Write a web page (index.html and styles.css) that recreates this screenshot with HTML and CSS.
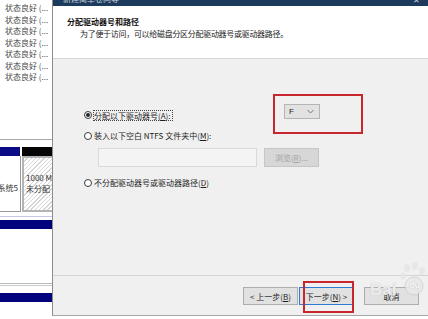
FILE: index.html
```html
<!DOCTYPE html>
<html lang="zh-CN">
<head>
<meta charset="utf-8">
<title>分配驱动器号和路径</title>
<link rel="stylesheet" href="styles.css">
</head>
<body>
<div class="screen">
  <aside class="left">
    <ul class="status-list">
      <li>状态良好 (...</li>
      <li>状态良好 (...</li>
      <li>状态良好 (...</li>
      <li>状态良好 (...</li>
      <li>状态良好 (...</li>
      <li>状态良好 (...</li>
      <li>状态良好 (...</li>
    </ul>
    <div class="rule"></div>
    <div class="bars"><span class="bar-blue"></span><span class="bar-black"></span></div>
    <div class="cells">
      <div class="cell sys"><span>系统5</span></div>
      <div class="cell unalloc"><span>1000 MB</span><span>未分配</span></div>
    </div>
    <div class="rule lav"></div>
    <div class="navy first"></div>
    <div class="double"></div>
    <div class="navy second"></div>
  </aside>

  <section class="dialog">
    <div class="titlebar"><span class="tb-text">新建简单卷向导</span><span class="tb-close">✕</span></div>
    <header class="head">
      <div class="h-title">分配驱动器号和路径</div>
      <div class="h-sub">为了便于访问，可以给磁盘分区分配驱动器号或驱动器路径。</div>
    </header>
    <div class="body">
      <div class="top">
        <div class="opts-col">
          <div class="radio-row"><span class="radio checked"></span><span class="focus">分配以下驱动器号(<u>A</u>):</span></div>
          <div class="radio-row"><span class="radio"></span><span class="lbl">装入以下空白 NTFS 文件夹中(<u>M</u>):</span></div>
        </div>
        <div class="annot-box">
          <div class="combo"><span class="combo-val">F</span>
            <svg class="chev" width="7" height="5" viewBox="0 0 7 5"><path d="M0.5 1 L3.5 4 L6.5 1" fill="none" stroke="#777" stroke-width="1"/></svg>
          </div>
        </div>
      </div>
      <div class="path-row">
        <div class="path-input"></div>
        <div class="browse">浏览(<u>R</u>)...</div>
      </div>
      <div class="radio-row third"><span class="radio"></span><span class="lbl">不分配驱动器号或驱动器路径(<u>D</u>)</span></div>
    </div>
    <footer class="foot">
      <div class="btn">&lt; 上一步(<u>B</u>)</div>
      <div class="btn default">下一步(<u>N</u>) &gt;<span class="annot"></span></div>
      <div class="btn cancel">取消</div>
      <div class="watermark">
        <span class="wm-bai">Bai</span>
        <svg class="wm-paw" width="26" height="34" viewBox="0 0 26 34">
          <ellipse cx="7" cy="6" rx="3" ry="4" fill="#e6e6e6"/>
          <ellipse cx="15" cy="4" rx="3" ry="4" fill="#e6e6e6"/>
          <ellipse cx="22" cy="9" rx="3" ry="4" fill="#e6e6e6"/>
          <ellipse cx="3" cy="14" rx="2.5" ry="3.5" fill="#e6e6e6"/>
          <circle cx="14" cy="24" r="9" fill="#e9e9e9" stroke="#d0d0d0" stroke-width="1"/>
        </svg>
        <span class="wm-du">du</span>
      </div>
    </footer>
  </section>
</div>
</body>
</html>
```

FILE: styles.css
```css
* { box-sizing: border-box; }

html, body {
  margin: 0;
  padding: 0;
}

body {
  width: 428px;
  height: 319px;
  overflow: hidden;
  background: #ffffff;
  font-family: "Noto Sans CJK SC", "Noto Sans", sans-serif;
  font-size: 8px;
  color: #1e1e1e;
}

u { text-decoration: underline; text-underline-offset: 1px; }

.screen {
  display: flex;
  height: 319px;
}

/* ---------- left strip (disk management behind) ---------- */
.left {
  width: 52px;
  flex: none;
  overflow: hidden;
  color: #4a4a4a;
  background: #fff;
}

.status-list {
  list-style: none;
  margin: 0;
  padding: 2px 0 0 5px;
  height: 139px;
  line-height: 11.5px;
  white-space: nowrap;
}

.rule {
  height: 1px;
  background: #a9a9a9;
}

.bars {
  display: flex;
  gap: 2px;
  height: 9px;
  margin-top: 7px;
}
.bar-blue { width: 20px; background: #0b0b86; }
.bar-black { flex: 1; background: #050505; }

.cells {
  display: flex;
  gap: 1px;
  height: 56px;
  white-space: nowrap;
  line-height: 11px;
  color: #333;
}
.cell { overflow: hidden; display: flex; flex-direction: column; }
.cell.sys {
  width: 21px;
  background: #fff;
  border-right: 1px solid #9a9a9a;
  border-bottom: 1px solid #9a9a9a;
  align-items: flex-end;
  padding-top: 26px;
  padding-right: 2px;
}
.cell.unalloc {
  flex: 1;
  border: 2px solid #b4b4b4;
  border-right: none;
  padding: 14px 0 0 2px;
  background: repeating-linear-gradient(135deg, #ffffff 0 2px, #d6d6d6 2px 3px);
}

.rule.lav {
  margin-top: 4px;
  background: #c6c6ec;
}

.navy {
  height: 9px;
  background: #02027c;
}
.navy.first { margin-top: 3px; }
.double {
  margin-top: 54px;
  height: 3px;
  border-top: 1px solid #b9b9b9;
  border-bottom: 1px solid #c9c9c9;
}
.navy.second { margin-top: 7px; }

/* ---------- wizard dialog ---------- */
.dialog {
  flex: 1;
  height: 316px;
  display: flex;
  flex-direction: column;
  border-left: 1px solid #8c8c8c;
  border-bottom: 1px solid #a6a6a6;
  background: #f0f0f0;
}

.titlebar {
  height: 6px;
  flex: none;
  background: #1c3a5c;
  overflow: hidden;
  display: flex;
  justify-content: space-between;
  padding: 0 8px 0 10px;
  color: #c9d3df;
}
.tb-text { margin-top: -7px; line-height: 11px; }
.tb-close { margin-top: -6px; line-height: 11px; font-size: 8px; }

.head {
  height: 53px;
  flex: none;
  background: #ffffff;
  border-bottom: 1px solid #d7d7d7;
  padding: 10px 0 0 14px;
}
.h-title {
  font-weight: bold;
  line-height: 11px;
  color: #111;
}
.h-sub {
  margin-top: 1px;
  padding-left: 13px;
  line-height: 11px;
  color: #222;
  letter-spacing: -0.3px;
}

.body {
  height: 217px;
  flex: none;
  border-bottom: 1px solid #d4d4d4;
  padding: 35px 0 0 31px;
}

.top { display: flex; }

.opts-col {
  width: 189px;
  padding-top: 16px;
  display: flex;
  flex-direction: column;
  gap: 11px;
}

.radio-row {
  display: flex;
  align-items: center;
  gap: 1px;
  height: 10px;
  white-space: nowrap;
}
.radio {
  width: 8px;
  height: 8px;
  flex: none;
  border: 1px solid #3a3a3a;
  border-radius: 50%;
  background: #fff;
  display: flex;
  align-items: center;
  justify-content: center;
}
.radio.checked::after {
  content: "";
  width: 4px;
  height: 4px;
  border-radius: 50%;
  background: #262626;
}
.focus {
  border: 1px dotted #444;
  line-height: 9px;
  padding: 0 1px 0 0;
}
.lbl { margin-left: 1px; line-height: 10px; }

.annot-box {
  width: 90px;
  height: 40px;
  border: 2px solid #c8262d;
  padding: 8px 0 0 9px;
}
.combo {
  width: 36px;
  height: 15px;
  border: 1px solid #b5b5b5;
  background: #e2e2e2;
  display: flex;
  align-items: center;
  justify-content: space-between;
  padding: 0 5px 0 4px;
  color: #222;
}
.combo-val { font-family: "Liberation Sans", sans-serif; font-size: 8px; }

.path-row {
  display: flex;
  gap: 7px;
  margin: 7px 0 0 14px;
}
.path-input {
  width: 159px;
  height: 19px;
  border: 1px solid #d9d9d9;
  background: #f4f4f4;
}
.browse {
  width: 55px;
  height: 19px;
  border: 1px solid #c6c6c6;
  background: #d7d7d7;
  color: #a2a2a2;
  display: flex;
  align-items: center;
  justify-content: center;
}

.radio-row.third { margin-top: 11px; }

/* ---------- footer buttons ---------- */
.foot {
  flex: 1;
  position: relative;
  display: flex;
  justify-content: flex-end;
  align-items: flex-start;
  padding: 11px 9px 0 0;
}
.btn {
  width: 55px;
  height: 18px;
  border: 1px solid #adadad;
  background: #e1e1e1;
  display: flex;
  align-items: center;
  justify-content: center;
  white-space: nowrap;
  color: #1e1e1e;
}
.btn.default {
  margin-left: 1px;
  border-color: #2b7bd2;
  position: relative;
}
.btn.cancel { margin-left: 10px; }

.annot {
  position: absolute;
  left: 3px;
  top: -7px;
  width: 51px;
  height: 32px;
  border: 2px solid #c8262d;
}

.watermark {
  position: absolute;
  right: 2px;
  top: -14px;
  width: 60px;
  height: 46px;
  pointer-events: none;
}
.wm-bai {
  position: absolute;
  left: 4px;
  top: 18px;
  font-family: "Liberation Sans", sans-serif;
  font-weight: bold;
  font-size: 17px;
  color: rgba(255, 255, 255, 0.75);
  text-shadow: 0 0 1px #b0b0b0;
}
.wm-paw {
  position: absolute;
  right: 0;
  top: 0;
  opacity: 0.85;
}
.wm-du {
  position: absolute;
  right: 6px;
  top: 18px;
  font-family: "Liberation Sans", sans-serif;
  font-weight: bold;
  font-size: 9px;
  color: #fafafa;
  text-shadow: 0 0 1px #aaa;
}
```
